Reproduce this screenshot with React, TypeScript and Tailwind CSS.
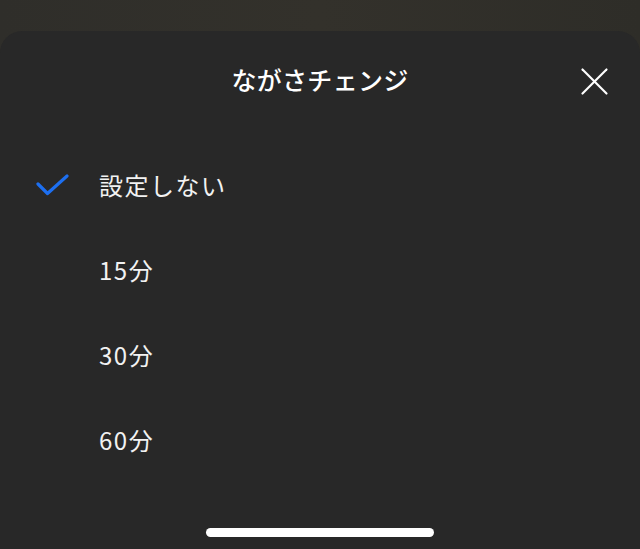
import React, { useState } from 'react';

const options = ['設定しない', '15分', '30分', '60分'];

const font = { fontFamily: '"Noto Sans CJK JP", "Noto Sans", sans-serif' };

export default function App() {
  const [selected, setSelected] = useState(0);

  return (
    <div className="h-[549px] w-[640px] overflow-hidden bg-gradient-to-r from-[#2f2e2a] via-[#33312b] to-[#2e2d28] pt-[31px]" style={font}>
      <div className="flex h-[518px] flex-col rounded-t-[22px] bg-[#282828] text-white">
        {/* Header */}
        <div className="relative flex h-[98px] items-center justify-center">
          <h1 className="text-[25px] font-medium tracking-[0.3px] text-white">ながさチェンジ</h1>
          <button className="absolute left-[580px] top-[36px] h-[29px] w-[29px]">
            <svg viewBox="0 0 29 29" className="h-[29px] w-[29px]" fill="none" stroke="white" strokeWidth="2.2" strokeLinecap="round">
              <path d="M2.5 2.5 L26.5 26.5" />
              <path d="M26.5 2.5 L2.5 26.5" />
            </svg>
          </button>
        </div>

        {/* Options */}
        <div className="flex flex-col pt-[13px]">
          {options.map((label, i) => (
            <button
              key={label}
              onClick={() => setSelected(i)}
              className="flex h-[85px] items-center text-left"
            >
              <div className="flex w-[99px] items-center pl-[36px]">
                {selected === i && (
                  <svg viewBox="0 0 33 22" className="h-[22px] w-[33px]" fill="none" stroke="#1d6ff0" strokeWidth="3.2" strokeLinecap="round" strokeLinejoin="round">
                    <path d="M2 10 L11.5 19.5 L31 2" />
                  </svg>
                )}
              </div>
              <span className="text-[24px] tracking-[1.5px] text-[#f2f2f2]">{label}</span>
            </button>
          ))}
        </div>

        {/* Home indicator */}
        <div className="mt-auto flex justify-center pb-[12px]">
          <div className="h-[9px] w-[228px] rounded-full bg-white" />
        </div>
      </div>
    </div>
  );
}
